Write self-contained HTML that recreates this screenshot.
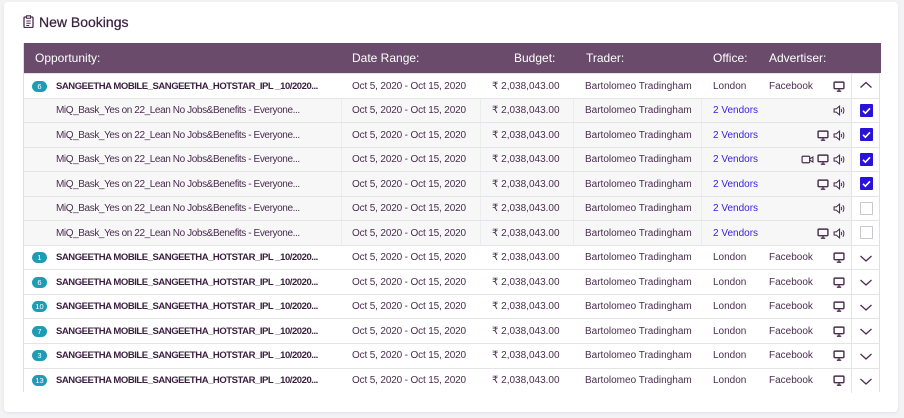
<!DOCTYPE html><html><head><style>
*{margin:0;padding:0;box-sizing:border-box}
body{width:904px;height:418px;background:#f3f3f5;font-family:"Liberation Sans",sans-serif;color:#4a2d4f;position:relative;overflow:hidden}
.card{position:absolute;left:4px;top:2px;width:894px;height:410px;background:#fff;border-radius:4px;box-shadow:0 1px 3px rgba(0,0,0,.08)}
.title{position:absolute;left:39px;top:14px;font-size:14px;color:#3a1f3f;-webkit-text-stroke:0.25px #3a1f3f}
.tbl{position:absolute;left:23px;top:43px;width:857px;height:349px;border:1px solid #e2dee4;border-top:none}
.hd{position:absolute;left:0;top:0;width:857px;height:30px;background:#6a4b6c;color:#fff;font-size:12px}
.hd span,.r span{position:absolute;white-space:nowrap}
.hd span{top:8px}
.r{position:absolute;left:0;width:855px;height:24.5px;border-top:1px solid #e6e2e8;font-size:10px;background:#fff}
.r span{top:6.5px}
.r span.d{letter-spacing:-0.15px}
.r.c{background:#f7f7f8}
.r.c span.o{letter-spacing:-0.4px}
.sep{position:absolute;top:0;height:24px;width:1px;background:#ececee}
.b{font-weight:bold;font-size:9.5px;color:#3a1f3f;letter-spacing:-0.45px}
.bd{position:absolute;left:8px;top:6.5px;width:15px;height:11px;border-radius:6px;background:#1f9cb3;color:#fff;font-size:7.5px;text-align:center;line-height:11px}
.v{color:#3b22e0}
.ck{position:absolute;left:827px;top:0;width:28px;height:24px;border-left:1px solid #e6e2e8;background:#fff}
.box{position:absolute;left:8px;top:5px;width:13px;height:13px;background:#2b12d9;border-radius:1px}
.box.e{background:#fff;border:1px solid #c9c6cc}
svg.i{position:absolute;top:6.5px}
</style></head><body>
<svg width="0" height="0" style="position:absolute"><defs>
<symbol id="mon" viewBox="0 0 11 10"><rect x="1" y="1" width="9" height="6" rx="0.8" fill="none" stroke="#4a2d4f" stroke-width="1.3"/><path d="M5.5 7v2M3.5 9.3h4" stroke="#4a2d4f" stroke-width="1.2"/></symbol>
<symbol id="spk" viewBox="0 0 11 10"><path d="M1 3.5h2l3-2.5v8l-3-2.5H1z" fill="none" stroke="#4a2d4f" stroke-width="1"/><path d="M7.5 3.5q1 1.5 0 3M9 2q2 3 0 6" fill="none" stroke="#4a2d4f" stroke-width="0.9"/></symbol>
<symbol id="vid" viewBox="0 0 12 10"><rect x="1" y="2" width="7" height="6" rx="0.8" fill="none" stroke="#4a2d4f" stroke-width="1.1"/><path d="M8 4.5l3-1.8v4.6L8 5.5" fill="none" stroke="#4a2d4f" stroke-width="1"/></symbol>
<symbol id="dn" viewBox="0 0 18 16"><path d="M3.5 6l5.5 5 5.5-5" fill="none" stroke="#4a2d4f" stroke-width="1.3"/></symbol>
<symbol id="up" viewBox="0 0 18 16"><path d="M3.5 10.5l5.5-5 5.5 5" fill="none" stroke="#4a2d4f" stroke-width="1.3"/></symbol>
<symbol id="chk" viewBox="0 0 13 13"><path d="M3 6.8l2.4 2.4L10 4.3" fill="none" stroke="#fff" stroke-width="1.6"/></symbol>
</defs></svg>
<div class="card"></div>
<svg style="position:absolute;left:23px;top:15px" width="11" height="13" viewBox="0 0 11 13"><rect x="1" y="2" width="9" height="10.5" rx="1" fill="none" stroke="#4a2d4f" stroke-width="1.3"/><rect x="3.5" y="0.8" width="4" height="2.4" fill="#fff" stroke="#4a2d4f" stroke-width="1.1"/><path d="M3.3 6h4.4M3.3 8.3h4.4M3.3 10.5h3" stroke="#4a2d4f" stroke-width="1"/></svg>
<div class="title">New Bookings</div>
<div class="tbl">
<div class="hd"><span style="left:11px">Opportunity:</span><span style="left:328px">Date Range:</span><span style="left:490px">Budget:</span><span style="left:562px">Trader:</span><span style="left:689px">Office:</span><span style="left:745px">Advertiser:</span></div>

<div class="r" style="top:30px"><div class="bd">6</div><span class="b" style="left:32px">SANGEETHA MOBILE_SANGEETHA_HOTSTAR_IPL _10/2020...</span><span class="d" style="left:328px">Oct 5, 2020 - Oct 15, 2020</span><span style="left:468px">₹ 2,038,043.00</span><span style="left:561px">Bartolomeo Tradingham</span><span style="left:689px">London</span><span style="left:745px">Facebook</span><svg class="i" style="left:809px" width="12" height="11"><use href="#mon"/></svg><div class="ck"><svg style="position:absolute;left:5px;top:3px" width="18" height="16"><use href="#up"/></svg></div></div>

<div class="r c" style="top:54.5px"><div class="sep" style="left:317px"></div><div class="sep" style="left:456px"></div><div class="sep" style="left:549px"></div><div class="sep" style="left:677px"></div><span class="o" style="left:32px">MiQ_Bask_Yes on 22_Lean No Jobs&amp;Benefits - Everyone...</span><span class="d" style="left:328px">Oct 5, 2020 - Oct 15, 2020</span><span style="left:468px">₹ 2,038,043.00</span><span style="left:561px">Bartolomeo Tradingham</span><span class="v" style="left:689px">2 Vendors</span><svg class="i" style="left:809px" width="12" height="11"><use href="#spk"/></svg><div class="ck"><div class="box"><svg width="13" height="13"><use href="#chk"/></svg></div></div></div>

<div class="r c" style="top:79.1px"><div class="sep" style="left:317px"></div><div class="sep" style="left:456px"></div><div class="sep" style="left:549px"></div><div class="sep" style="left:677px"></div><span class="o" style="left:32px">MiQ_Bask_Yes on 22_Lean No Jobs&amp;Benefits - Everyone...</span><span class="d" style="left:328px">Oct 5, 2020 - Oct 15, 2020</span><span style="left:468px">₹ 2,038,043.00</span><span style="left:561px">Bartolomeo Tradingham</span><span class="v" style="left:689px">2 Vendors</span><svg class="i" style="left:793px" width="12" height="11"><use href="#mon"/></svg><svg class="i" style="left:809px" width="12" height="11"><use href="#spk"/></svg><div class="ck"><div class="box"><svg width="13" height="13"><use href="#chk"/></svg></div></div></div>

<div class="r c" style="top:103.6px"><div class="sep" style="left:317px"></div><div class="sep" style="left:456px"></div><div class="sep" style="left:549px"></div><div class="sep" style="left:677px"></div><span class="o" style="left:32px">MiQ_Bask_Yes on 22_Lean No Jobs&amp;Benefits - Everyone...</span><span class="d" style="left:328px">Oct 5, 2020 - Oct 15, 2020</span><span style="left:468px">₹ 2,038,043.00</span><span style="left:561px">Bartolomeo Tradingham</span><span class="v" style="left:689px">2 Vendors</span><svg class="i" style="left:777px" width="13" height="11"><use href="#vid"/></svg><svg class="i" style="left:793px" width="12" height="11"><use href="#mon"/></svg><svg class="i" style="left:809px" width="12" height="11"><use href="#spk"/></svg><div class="ck"><div class="box"><svg width="13" height="13"><use href="#chk"/></svg></div></div></div>

<div class="r c" style="top:128.2px"><div class="sep" style="left:317px"></div><div class="sep" style="left:456px"></div><div class="sep" style="left:549px"></div><div class="sep" style="left:677px"></div><span class="o" style="left:32px">MiQ_Bask_Yes on 22_Lean No Jobs&amp;Benefits - Everyone...</span><span class="d" style="left:328px">Oct 5, 2020 - Oct 15, 2020</span><span style="left:468px">₹ 2,038,043.00</span><span style="left:561px">Bartolomeo Tradingham</span><span class="v" style="left:689px">2 Vendors</span><svg class="i" style="left:793px" width="12" height="11"><use href="#mon"/></svg><svg class="i" style="left:809px" width="12" height="11"><use href="#spk"/></svg><div class="ck"><div class="box"><svg width="13" height="13"><use href="#chk"/></svg></div></div></div>

<div class="r c" style="top:152.7px"><div class="sep" style="left:317px"></div><div class="sep" style="left:456px"></div><div class="sep" style="left:549px"></div><div class="sep" style="left:677px"></div><span class="o" style="left:32px">MiQ_Bask_Yes on 22_Lean No Jobs&amp;Benefits - Everyone...</span><span class="d" style="left:328px">Oct 5, 2020 - Oct 15, 2020</span><span style="left:468px">₹ 2,038,043.00</span><span style="left:561px">Bartolomeo Tradingham</span><span class="v" style="left:689px">2 Vendors</span><svg class="i" style="left:809px" width="12" height="11"><use href="#spk"/></svg><div class="ck"><div class="box e"></div></div></div>

<div class="r c" style="top:177.2px"><div class="sep" style="left:317px"></div><div class="sep" style="left:456px"></div><div class="sep" style="left:549px"></div><div class="sep" style="left:677px"></div><span class="o" style="left:32px">MiQ_Bask_Yes on 22_Lean No Jobs&amp;Benefits - Everyone...</span><span class="d" style="left:328px">Oct 5, 2020 - Oct 15, 2020</span><span style="left:468px">₹ 2,038,043.00</span><span style="left:561px">Bartolomeo Tradingham</span><span class="v" style="left:689px">2 Vendors</span><svg class="i" style="left:793px" width="12" height="11"><use href="#mon"/></svg><svg class="i" style="left:809px" width="12" height="11"><use href="#spk"/></svg><div class="ck"><div class="box e"></div></div></div>

<div class="r" style="top:201.8px"><div class="bd">1</div><span class="b" style="left:32px">SANGEETHA MOBILE_SANGEETHA_HOTSTAR_IPL _10/2020...</span><span class="d" style="left:328px">Oct 5, 2020 - Oct 15, 2020</span><span style="left:468px">₹ 2,038,043.00</span><span style="left:561px">Bartolomeo Tradingham</span><span style="left:689px">London</span><span style="left:745px">Facebook</span><svg class="i" style="left:809px" width="12" height="11"><use href="#mon"/></svg><div class="ck"><svg style="position:absolute;left:5px;top:4px" width="18" height="16"><use href="#dn"/></svg></div></div>

<div class="r" style="top:226.3px"><div class="bd">6</div><span class="b" style="left:32px">SANGEETHA MOBILE_SANGEETHA_HOTSTAR_IPL _10/2020...</span><span class="d" style="left:328px">Oct 5, 2020 - Oct 15, 2020</span><span style="left:468px">₹ 2,038,043.00</span><span style="left:561px">Bartolomeo Tradingham</span><span style="left:689px">London</span><span style="left:745px">Facebook</span><svg class="i" style="left:809px" width="12" height="11"><use href="#mon"/></svg><div class="ck"><svg style="position:absolute;left:5px;top:4px" width="18" height="16"><use href="#dn"/></svg></div></div>

<div class="r" style="top:250.9px"><div class="bd">10</div><span class="b" style="left:32px">SANGEETHA MOBILE_SANGEETHA_HOTSTAR_IPL _10/2020...</span><span class="d" style="left:328px">Oct 5, 2020 - Oct 15, 2020</span><span style="left:468px">₹ 2,038,043.00</span><span style="left:561px">Bartolomeo Tradingham</span><span style="left:689px">London</span><span style="left:745px">Facebook</span><svg class="i" style="left:809px" width="12" height="11"><use href="#mon"/></svg><div class="ck"><svg style="position:absolute;left:5px;top:4px" width="18" height="16"><use href="#dn"/></svg></div></div>

<div class="r" style="top:275.4px"><div class="bd">7</div><span class="b" style="left:32px">SANGEETHA MOBILE_SANGEETHA_HOTSTAR_IPL _10/2020...</span><span class="d" style="left:328px">Oct 5, 2020 - Oct 15, 2020</span><span style="left:468px">₹ 2,038,043.00</span><span style="left:561px">Bartolomeo Tradingham</span><span style="left:689px">London</span><span style="left:745px">Facebook</span><svg class="i" style="left:809px" width="12" height="11"><use href="#mon"/></svg><div class="ck"><svg style="position:absolute;left:5px;top:4px" width="18" height="16"><use href="#dn"/></svg></div></div>

<div class="r" style="top:299.9px"><div class="bd">3</div><span class="b" style="left:32px">SANGEETHA MOBILE_SANGEETHA_HOTSTAR_IPL _10/2020...</span><span class="d" style="left:328px">Oct 5, 2020 - Oct 15, 2020</span><span style="left:468px">₹ 2,038,043.00</span><span style="left:561px">Bartolomeo Tradingham</span><span style="left:689px">London</span><span style="left:745px">Facebook</span><svg class="i" style="left:809px" width="12" height="11"><use href="#mon"/></svg><div class="ck"><svg style="position:absolute;left:5px;top:4px" width="18" height="16"><use href="#dn"/></svg></div></div>

<div class="r" style="top:324.5px"><div class="bd">13</div><span class="b" style="left:32px">SANGEETHA MOBILE_SANGEETHA_HOTSTAR_IPL _10/2020...</span><span class="d" style="left:328px">Oct 5, 2020 - Oct 15, 2020</span><span style="left:468px">₹ 2,038,043.00</span><span style="left:561px">Bartolomeo Tradingham</span><span style="left:689px">London</span><span style="left:745px">Facebook</span><svg class="i" style="left:809px" width="12" height="11"><use href="#mon"/></svg><div class="ck"><svg style="position:absolute;left:5px;top:4px" width="18" height="16"><use href="#dn"/></svg></div></div>

</div>
</body></html>
